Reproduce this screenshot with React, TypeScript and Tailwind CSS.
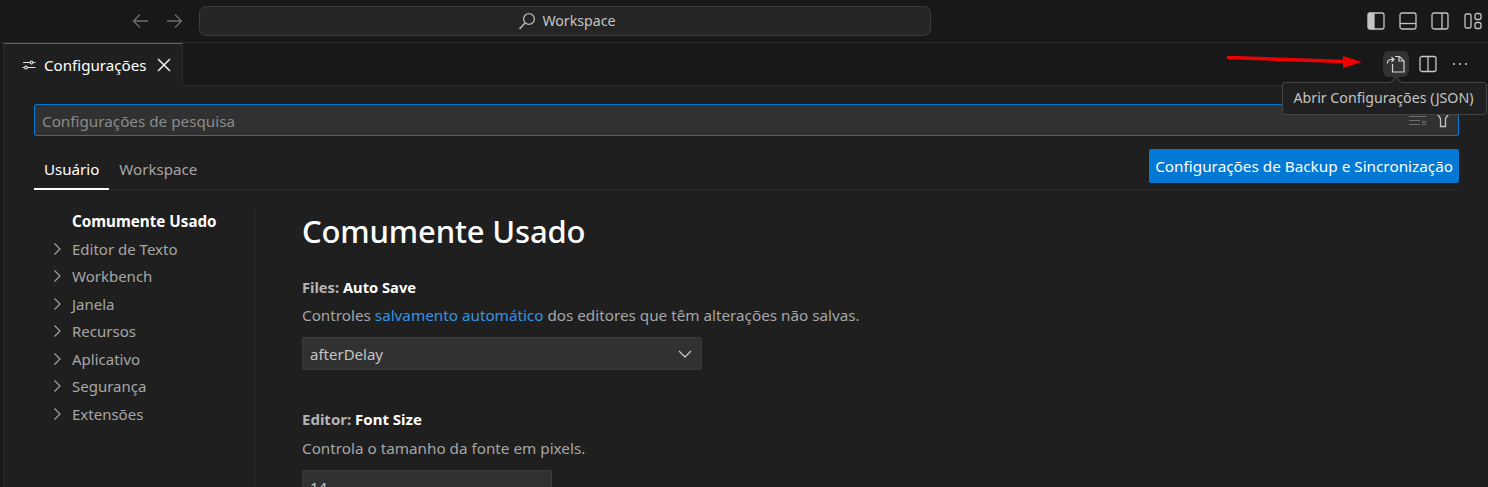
import React from "react";

function Chevron() {
  return (
    <svg width="16" height="16" viewBox="0 0 16 16" fill="none" stroke="#a8a8a8" strokeWidth="1.1" className="shrink-0">
      <path d="M4.500 2.500 L10 8 L4.500 13.500" />
    </svg>
  );
}

function NavRow({ label }: { label: string }) {
  return (
    <div className="flex h-[27.5px] items-center pl-[16px] text-[15px] text-[#a6a6a6]">
      <Chevron />
      <span className="ml-[6px]">{label}</span>
    </div>
  );
}

function LayoutIcon({ kind }: { kind: "left" | "bottom" | "right" }) {
  return (
    <svg width="18" height="18" viewBox="0 0 18 18" fill="none" stroke="#c4c4c4" strokeWidth="1.3">
      <rect x="1" y="1" width="16" height="16" rx="2" />
      {kind === "left" && <path d="M1.500 1.500h5.500v15H1.500z" fill="#c4c4c4" />}
      {kind === "bottom" && <path d="M1 11.500h16" />}
      {kind === "right" && <path d="M11 1v16" />}
    </svg>
  );
}

export default function App() {
  return (
    <div className="relative flex h-[487px] w-[1488px] flex-col overflow-hidden bg-[#181818] font-['Noto_Sans',sans-serif] text-[#cccccc]">
      {/* Title bar */}
      <div className="flex h-[43px] shrink-0 items-center border-b border-[#2b2b2b] pb-[1px] pl-[131px]">
        <svg width="20" height="20" viewBox="0 0 20 20" fill="none" stroke="#6e6e6e" strokeWidth="1.3">
          <path d="M17 10H2.500M9 3.500 2.500 10 9 16.500" />
        </svg>
        <svg width="20" height="20" viewBox="0 0 20 20" fill="none" stroke="#6e6e6e" strokeWidth="1.3" className="ml-[13px]">
          <path d="M3 10h14.500M11 3.500l6.500 6.500-6.500 6.500" />
        </svg>
        <div className="ml-[15px] flex h-[30px] w-[732px] items-center justify-center rounded-[7px] border border-[#3c3c3c] bg-[#252525] pl-[4px] text-[14.2px] text-[#c4c4c4]">
          <svg width="18" height="18" viewBox="0 0 18 18" fill="none" stroke="#b0b0b0" strokeWidth="1.4" className="mr-[6px]">
            <circle cx="11" cy="7" r="5.400" />
            <path d="M7 11 1.500 17" strokeWidth="1.800" />
          </svg>
          Workspace
        </div>
        <div className="ml-[436px] flex items-center">
          <LayoutIcon kind="left" />
          <div className="ml-[14px]"><LayoutIcon kind="bottom" /></div>
          <div className="ml-[14px]"><LayoutIcon kind="right" /></div>
          <svg width="18" height="18" viewBox="0 0 18 18" fill="none" stroke="#c4c4c4" strokeWidth="1.3" className="ml-[15px]">
            <rect x="1" y="2" width="6" height="14" rx="1.500" />
            <rect x="11" y="1.500" width="6" height="6" rx="2" />
            <rect x="11" y="10.500" width="6" height="6" rx="2" />
          </svg>
        </div>
      </div>

      {/* Tab strip */}
      <div className="ml-[3px] flex h-[43px] shrink-0 border-b border-l border-[#2b2b2b]">
        <div className="-mb-px flex w-[179px] items-center border-r border-t border-r-[#2b2b2b] border-t-[#0078d4] bg-[#1f1f1f] pl-[17px] text-[15.150px] text-white">
          <svg width="16" height="16" viewBox="0 0 16 16" fill="none" stroke="#e0e0e0" strokeWidth="1.100">
            <path d="M2 5.500h7M12 5.500h2.500M1.500 10.500h2M6.500 10.500h8" />
            <circle cx="10.500" cy="5.500" r="1.400" />
            <circle cx="5" cy="10.500" r="1.400" />
          </svg>
          <span className="ml-[7px]">Configurações</span>
          <svg width="16" height="16" viewBox="0 0 16 16" fill="none" stroke="#f0f0f0" strokeWidth="1.500" className="ml-[9px]">
            <path d="M2 2l12 12M14 2 2 14" />
          </svg>
        </div>
        <div className="flex flex-1 items-center justify-end">
          <div className="flex h-[26px] w-[26px] items-center justify-center rounded-[6px] bg-[#313232]">
            <svg width="20" height="20" viewBox="0 0 20 20" fill="none" stroke="#d4d4d4" strokeWidth="1.200">
              <path d="M9 2.500h4.500L18 7v11H6.500v-8" />
              <path d="M13 2.500V7h5" />
              <path d="M1.500 9.500a3.500 3.500 0 0 1 3.500-4h3" />
              <path d="M5.500 3l2.500 2.500-2.500 2.500" />
            </svg>
          </div>
          <svg width="18" height="18" viewBox="0 0 18 18" fill="none" stroke="#c8c8c8" strokeWidth="1.300" className="ml-[10px]">
            <rect x="1" y="1.500" width="16" height="15" rx="2" />
            <path d="M9 1.500v15" />
          </svg>
          <svg width="18" height="18" viewBox="0 0 18 18" fill="#c8c8c8" className="ml-[14px] mr-[19px]">
            <circle cx="3" cy="9" r="1.100" />
            <circle cx="9" cy="9" r="1.100" />
            <circle cx="15" cy="9" r="1.100" />
          </svg>
        </div>
      </div>

      {/* Settings editor */}
      <div className="ml-[3px] flex min-h-0 flex-1 flex-col border-l border-[#2b2b2b] bg-[#1f1f1f] pl-[30px] pr-[29px] pt-[18px]">
        <div className="flex h-[32px] shrink-0 items-center rounded-[2px] border border-[#0078d4] bg-[#313131] pl-[7px] pr-[6px] text-[15.250px] text-[#8a8a8a]">
          <span className="mt-[2px] flex-1">Configurações de pesquisa</span>
          <svg width="20" height="16" viewBox="0 0 20 16" fill="none" stroke="#6f6f6f" strokeWidth="1.200" className="mt-[2px]">
            <path d="M1 3.500h17M1 7.500h11M1 11.500h11M14 8l4 4M18 8l-4 4" />
          </svg>
          <svg width="18" height="18" viewBox="0 0 18 18" fill="none" stroke="#c4c4c4" strokeWidth="1.300" className="-mt-[3px] ml-[6px]">
            <path d="M1.500 1.500h15l-5 7v8h-5v-8z" />
          </svg>
        </div>

        <div className="mt-[13px] flex h-[41px] shrink-0 items-end justify-between border-b border-[#2b2b2b]">
          <div className="flex text-[15.100px]">
            <div className="-mb-px h-[39px] border-b-2 border-white px-[10px] pt-[7px] text-white">Usuário</div>
            <div className="h-[38px] px-[10px] pt-[7px] text-[#a6a6a6]">Workspace</div>
          </div>
          <div className="mb-[6px] flex h-[34px] items-center rounded-[2px] bg-[#0078d4] px-[6px] text-[15.300px] text-white">
            Configurações de Backup e Sincronização
          </div>
        </div>

        <div className="mt-[17px] flex min-h-0 flex-1">
          <div className="w-[221px] shrink-0 border-r border-[#2b2b2b]">
            <div className="flex h-[28px] items-center pl-[38px] text-[15.200px] font-bold text-white">Comumente Usado</div>
            <NavRow label="Editor de Texto" />
            <NavRow label="Workbench" />
            <NavRow label="Janela" />
            <NavRow label="Recursos" />
            <NavRow label="Aplicativo" />
            <NavRow label="Segurança" />
            <NavRow label="Extensões" />
          </div>
          <div className="pl-[47px]">
            <h1 className="mt-[3px] text-[31px] font-medium leading-[42px] tracking-[-0.15px] text-white">Comumente Usado</h1>
            <div className="mt-[25px] text-[14.700px] font-bold leading-[20px] text-[#b4b4b4]">
              Files: <span className="text-white">Auto Save</span>
            </div>
            <div className="mt-[8px] text-[15.250px] leading-[20px] text-[#a6a6a6]">
              Controles <span className="text-[#3794e0]">salvamento automático</span> dos editores que têm alterações não salvas.
            </div>
            <div className="mt-[12px] flex h-[33px] w-[400px] items-center justify-between rounded-[2px] border border-[#3c3c3c] bg-[#313131] pl-[7px] pr-[8px] text-[15px] text-[#c4c4c4]">
              <span className="mt-[1px]">afterDelay</span>
              <svg width="16" height="16" viewBox="0 0 16 16" fill="none" stroke="#c4c4c4" strokeWidth="1.300">
                <path d="M2 5l6 6 6-6" />
              </svg>
            </div>
            <div className="mt-[39px] text-[15px] font-bold leading-[20px] text-[#b4b4b4]">
              Editor: <span className="text-white">Font Size</span>
            </div>
            <div className="mt-[9px] text-[15.250px] leading-[20px] text-[#a6a6a6]">Controla o tamanho da fonte em pixels.</div>
            <div className="mt-[12px] h-[33px] w-[250px] rounded-[2px] border border-[#3c3c3c] bg-[#313131] pl-[7px] pt-[5px] text-[15px] text-[#c4c4c4]">14</div>
          </div>
        </div>
      </div>

      {/* Tooltip */}
      <div className="absolute left-[1282px] top-[82px] flex h-[33px] w-[205px] items-center justify-center rounded-[3px] border border-[#454545] bg-[#202020] pb-[2px] pr-[2px] text-[14.200px] text-[#c4c4c4]">
        Abrir Configurações (JSON)
      </div>
      <div className="absolute left-[1392px] top-[78px] h-[8px] w-[8px] rotate-45 border-l border-t border-[#454545] bg-[#202020]" />

      {/* Red annotation arrow */}
      <svg width="140" height="18" viewBox="0 0 140 18" className="absolute left-[1226px] top-[52px]">
        <path d="M2.500 5.500 L118 9.500" stroke="#f00000" strokeWidth="3.500" strokeLinecap="round" />
        <path d="M117 4 L136 10 L117 16 Z" fill="#f00000" />
      </svg>
    </div>
  );
}
